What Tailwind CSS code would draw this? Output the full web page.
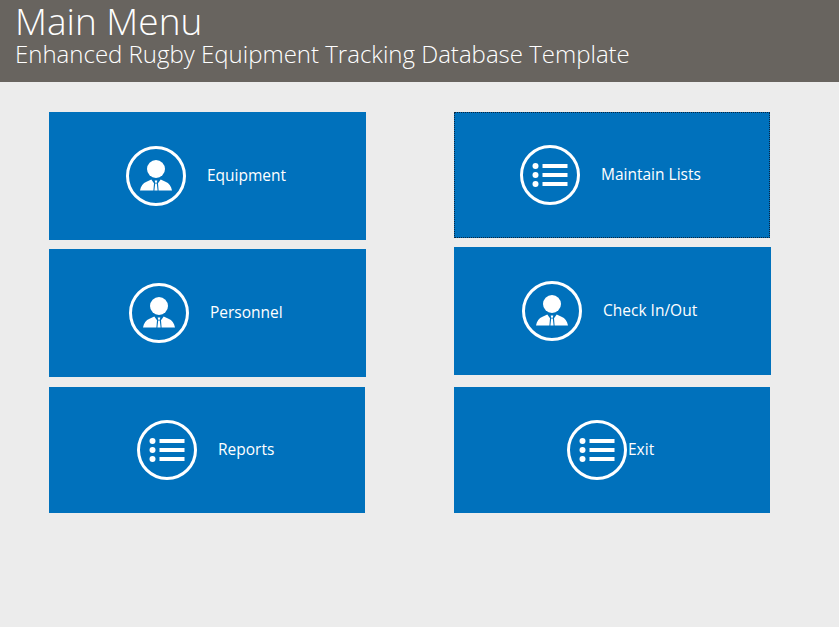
<!doctype html>
<html>
<head>
<meta charset="utf-8">
<script src="https://cdn.jsdelivr.net/npm/@tailwindcss/browser@4"></script>
</head>
<body class="m-0 h-[627px] w-[839px] overflow-hidden bg-[#ececec] font-['Open_Sans',sans-serif] text-white">
<header class="h-[82px] bg-[#68645f] pl-[15px] pt-[1px] font-light">
  <h1 class="text-[37px] leading-[40px] font-light">Main Menu</h1>
  <p class="text-[24px] leading-[26px] font-light">Enhanced Rugby Equipment Tracking Database Template</p>
</header>
<main class="flex pt-[30px] pl-[49px]">
  <div class="flex w-[317px] flex-col">
    <button class="flex h-[128px] w-[317px] items-center bg-[#0071bc] pl-[77px]">
      <svg class="h-[60px] w-[60px] shrink-0" viewBox="0 0 60 60" fill="#fff"><circle cx="30" cy="30" r="28.5" fill="none" stroke="#fff" stroke-width="3"/><circle cx="30" cy="23" r="9"/><path d="M14 44.500c.8-4.500 3-7.500 6.500-8.800l4.800-2.200 2.700 3.800-.6 7.200zM46 44.500c-.8-4.500-3-7.500-6.500-8.800l-4.800-2.200-2.700 3.800.6 7.200zM28.700 34.500h2.600l-.5 2.300h-1.600zM29.200 37.500h1.600l.8 7h-3.200z"/></svg>
      <span class="mb-[2px] ml-[21px] text-[15.500px] leading-5">Equipment</span>
    </button>
    <button class="mt-[9px] flex h-[128px] w-[317px] items-center bg-[#0071bc] pl-[80px]">
      <svg class="h-[60px] w-[60px] shrink-0" viewBox="0 0 60 60" fill="#fff"><circle cx="30" cy="30" r="28.5" fill="none" stroke="#fff" stroke-width="3"/><circle cx="30" cy="23" r="9"/><path d="M14 44.500c.8-4.500 3-7.500 6.500-8.800l4.800-2.200 2.700 3.800-.6 7.200zM46 44.500c-.8-4.500-3-7.500-6.500-8.800l-4.800-2.200-2.700 3.800.6 7.200zM28.700 34.500h2.600l-.5 2.300h-1.600zM29.200 37.500h1.600l.8 7h-3.200z"/></svg>
      <span class="mb-[2px] ml-[21px] text-[15.500px] leading-5">Personnel</span>
    </button>
    <button class="mt-[10px] flex h-[126px] w-[316px] items-center bg-[#0071bc] pl-[88px]">
      <svg class="h-[60px] w-[60px] shrink-0" viewBox="0 0 60 60" fill="#fff"><circle cx="30" cy="30" r="28.5" fill="none" stroke="#fff" stroke-width="3"/><circle cx="15.500" cy="21" r="3"/><circle cx="15.500" cy="30" r="3"/><circle cx="15.500" cy="39" r="3"/><rect x="22.500" y="19" width="25" height="4"/><rect x="22.500" y="28" width="25" height="4"/><rect x="22.500" y="37" width="25" height="4"/></svg>
      <span class="mb-[2px] ml-[21px] text-[15.500px] leading-5">Reports</span>
    </button>
  </div>
  <div class="ml-[88px] flex w-[317px] flex-col">
    <button class="flex h-[126px] w-[316px] items-center border border-dotted border-[#0a2540] bg-[#0071bc] pl-[65px]">
      <svg class="h-[60px] w-[60px] shrink-0" viewBox="0 0 60 60" fill="#fff"><circle cx="30" cy="30" r="28.5" fill="none" stroke="#fff" stroke-width="3"/><circle cx="15.500" cy="21" r="3"/><circle cx="15.500" cy="30" r="3"/><circle cx="15.500" cy="39" r="3"/><rect x="22.500" y="19" width="25" height="4"/><rect x="22.500" y="28" width="25" height="4"/><rect x="22.500" y="37" width="25" height="4"/></svg>
      <span class="mb-[2px] ml-[21px] text-[15.500px] leading-5">Maintain Lists</span>
    </button>
    <button class="mt-[9px] flex h-[128px] w-[317px] items-center bg-[#0071bc] pl-[68px]">
      <svg class="h-[60px] w-[60px] shrink-0" viewBox="0 0 60 60" fill="#fff"><circle cx="30" cy="30" r="28.5" fill="none" stroke="#fff" stroke-width="3"/><circle cx="30" cy="23" r="9"/><path d="M14 44.500c.8-4.500 3-7.500 6.500-8.800l4.800-2.200 2.700 3.800-.6 7.200zM46 44.500c-.8-4.500-3-7.500-6.500-8.800l-4.800-2.200-2.700 3.800.6 7.200zM28.700 34.500h2.600l-.5 2.300h-1.600zM29.200 37.500h1.600l.8 7h-3.200z"/></svg>
      <span class="mb-[2px] ml-[21px] text-[15.500px] leading-5">Check In/Out</span>
    </button>
    <button class="mt-[12px] flex h-[126px] w-[316px] items-center bg-[#0071bc] pl-[113px]">
      <svg class="h-[60px] w-[60px] shrink-0" viewBox="0 0 60 60" fill="#fff"><circle cx="30" cy="30" r="28.5" fill="none" stroke="#fff" stroke-width="3"/><circle cx="15.500" cy="21" r="3"/><circle cx="15.500" cy="30" r="3"/><circle cx="15.500" cy="39" r="3"/><rect x="22.500" y="19" width="25" height="4"/><rect x="22.500" y="28" width="25" height="4"/><rect x="22.500" y="37" width="25" height="4"/></svg>
      <span class="mb-[2px] ml-[1px] text-[15.500px] leading-5">Exit</span>
    </button>
  </div>
</main>
</body>
</html>
